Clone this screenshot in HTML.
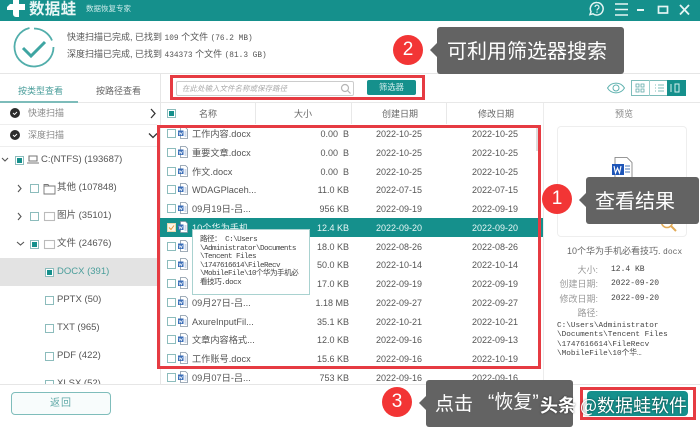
<!DOCTYPE html>
<html lang="zh"><head><meta charset="utf-8"><style>
html,body{margin:0;padding:0}
body{width:700px;height:428px;overflow:hidden;background:#fff;position:relative;font-family:"Liberation Sans","Noto Sans CJK SC",sans-serif;color:#555}
.a{position:absolute;white-space:nowrap}
.t{position:absolute;white-space:nowrap;line-height:14px;height:14px}
.m{font-family:"Liberation Mono","Noto Sans CJK SC",monospace}
.cb{position:absolute;width:7px;height:7px;border:1px solid #8cbcbc;background:#fff}
.cb.on::after{content:"";position:absolute;left:1px;top:1px;width:5px;height:5px;background:#15908c}
.row{position:absolute;left:160px;width:383px;height:19px;font-size:9.2px;color:#555}
.row .cb{left:7px;top:5px}
.row svg.i{position:absolute;left:18px;top:3px}
.row span{position:absolute;top:1px;line-height:19px;white-space:nowrap}
.n{left:32px}.s{right:194px;font-size:9px}.c{left:200px;width:78px;text-align:center;font-size:9px}.d{left:296px;width:78px;text-align:center;font-size:9px}
.sel{background:#15908c;color:#e8f6f5}
.box{position:absolute;border:3px solid #e63b42;box-sizing:border-box}
.call{position:absolute;background:#636363;border-radius:3px;color:#fff;font-size:20px;font-family:"Noto Sans CJK SC",sans-serif;white-space:nowrap}
.arr{position:absolute;width:0;height:0;border:7px solid transparent;border-right-color:#636363;border-left:0}
.num{position:absolute;width:30px;height:30px;border-radius:50%;background:#f23535;color:#fff;font-size:19px;line-height:30px;text-align:center}
.lb{position:absolute;width:50px;text-align:right;left:548px;font-size:9px;color:#999;line-height:14px}
.val{position:absolute;left:611px;font-size:8px;color:#444;line-height:14px}
</style></head><body>
<svg width="0" height="0" style="position:absolute"><defs><symbol id="f" viewBox="0 0 10 12"><path d="M2.500.5h5l2 2v9h-7z" fill="#fff" stroke="#8494a4" stroke-width=".8"/><rect x="0" y="3.500" width="5.500" height="5.500" fill="#3a6db8"/><path d="M1 5l.8 2.800.9-2 .9 2 .8-2.800" stroke="#fff" stroke-width=".6" fill="none"/><path d="M6.500 5h2M6.500 7h2M6.500 9h2" stroke="#7f9fce" stroke-width=".8"/></symbol></defs></svg>

<!-- title bar -->
<div class="a" style="left:0;top:0;width:700px;height:21px;background:#15908c"></div>
<svg class="a" style="left:6px;top:0" width="20" height="18"><path d="M7 0h6v4h6v6h-6v7h-3a3 3 0 0 1-3-3v-4h-6v-3l3-3h3z" fill="#fff"/></svg>
<div class="t" style="left:29px;top:1px;height:18px;line-height:18px;font-size:15.500px;font-weight:700;color:#e9f6f5;letter-spacing:.3px">数据蛙</div>
<div class="t" style="left:86px;top:2px;font-size:7.500px;color:#cfeceb">数据恢复专家</div>
<svg class="a" style="left:588px;top:0" width="112" height="20" fill="none" stroke="#e5f5f4" stroke-width="1.500">
<path d="M9 2.500a6.300 6.300 0 1 1-4 11.300l-3 .8 1-3a6.300 6.300 0 0 1 6-9.100z"/><path d="M7 7a2 2 0 1 1 3 1.800c-.8.500-1 1-1 1.700M9 11.500v1.200" stroke-width="1.200"/>
<path d="M27 4h13M27 9.500h13M27 15h13"/><path d="M49 10h7" stroke-width="2"/><rect x="70.500" y="6.500" width="9" height="6.500" stroke-width="1.700"/><path d="M92 5l9 9.500M101 5l-9 9.500" stroke-width="1.800"/></svg>

<!-- info -->
<svg class="a" style="left:11px;top:25px" width="46" height="46" fill="none" stroke="#52aeab" stroke-width="1.800"><path d="M23 3.500a19.500 19.500 0 0 1 18 12M42.500 22a19.500 19.500 0 1 1-24-19" /><path d="M12 23l8 8 14-14" stroke="#3ea5a2" stroke-width="3"/></svg>
<div class="t" style="left:67px;top:30px;font-size:9px;color:#555">快速扫描已完成, 已找到 <span class="m" style="font-size:7.800px">109</span> 个文件 <span class="m" style="font-size:7.800px">(76.2 MB)</span></div>
<div class="t" style="left:67px;top:47px;font-size:9px;color:#555">深度扫描已完成, 已找到 <span class="m" style="font-size:7.800px">434373</span> 个文件 <span class="m" style="font-size:7.800px">(81.3 GB)</span></div>

<!-- dividers -->
<div class="a" style="left:0;top:73px;width:700px;height:1px;background:#e6e6e6"></div>
<div class="a" style="left:0;top:102px;width:700px;height:1px;background:#e8e8e8"></div>
<div class="a" style="left:160px;top:74px;width:1px;height:310px;background:#e6e6e6"></div>
<div class="a" style="left:543px;top:103px;width:1px;height:281px;background:#ececec"></div>
<div class="a" style="left:0;top:384px;width:700px;height:1px;background:#e6e6e6"></div>

<!-- tabs -->
<div class="t" style="left:18px;top:84px;font-size:9px;color:#4b9e9b">按类型查看</div>
<div class="t" style="left:96px;top:84px;font-size:9px;color:#666">按路径查看</div>
<div class="a" style="left:0;top:101px;width:78px;height:2px;background:#7dbcba"></div>

<!-- tree -->
<svg class="a" style="left:10px;top:108px" width="10" height="10"><circle cx="5" cy="5" r="5" fill="#2c2c2c"/><path d="M3 5l1.500 1.500 2.500-2.500" stroke="#fff" fill="none" stroke-width=".9"/></svg>
<div class="t" style="left:28px;top:106px;font-size:9px;color:#888">快速扫描</div>
<svg class="a" style="left:149px;top:108px" width="8" height="11" fill="none" stroke="#333" stroke-width="1.300"><path d="M2 1l4 4.500-4 4.500"/></svg>
<div class="a" style="left:0;top:124px;width:157px;height:1px;background:#eee"></div>
<svg class="a" style="left:10px;top:130px" width="10" height="10"><circle cx="5" cy="5" r="5" fill="#2c2c2c"/><path d="M3 5l1.500 1.500 2.500-2.500" stroke="#fff" fill="none" stroke-width=".9"/></svg>
<div class="t" style="left:28px;top:128px;font-size:9px;color:#888">深度扫描</div>
<svg class="a" style="left:148px;top:132px" width="10" height="8" fill="none" stroke="#333" stroke-width="1.300"><path d="M1 1.500l4 4 4-4"/></svg>
<div class="a" style="left:0;top:146px;width:157px;height:1px;background:#eee"></div>

<svg class="a" style="left:0;top:150px" width="60" height="110" fill="none" stroke="#555" stroke-width="1.100">
<path d="M2 8l3 3 3-3"/><path d="M18 35l3 3.500-3 3.500M18 63l3 3.500-3 3.500M17 92l3.500 3 3.500-3"/>
<path d="M29 6h8v5h-8zM27 13h12" stroke="#777"/><path d="M44 36h11v8h-11zM44 36v-1.500h4l1 1.500" stroke="#777" stroke-width=".9"/><rect x="44.500" y="62.500" width="10" height="8" stroke="#bbb"/><rect x="44.500" y="90.500" width="10" height="8" stroke="#bbb"/></svg>
<div class="cb on" style="left:15px;top:156px"></div>
<div class="t" style="left:41px;top:153px;font-size:9.500px;color:#555">C:(NTFS) (193687)</div>
<div class="cb" style="left:30px;top:184px"></div>
<div class="t" style="left:57px;top:181px;font-size:9.500px;color:#555">其他 (107848)</div>
<div class="cb" style="left:30px;top:212px"></div>
<div class="t" style="left:57px;top:209px;font-size:9.500px;color:#555">图片 (35101)</div>
<div class="cb on" style="left:30px;top:240px"></div>
<div class="t" style="left:57px;top:237px;font-size:9.500px;color:#555">文件 (24676)</div>
<div class="a" style="left:0;top:258px;width:157px;height:28px;background:#e3e3e3"></div>
<div class="cb on" style="left:45px;top:268px"></div>
<div class="t" style="left:57px;top:265px;font-size:9.500px;color:#4b9e9b">DOCX (391)</div>
<div class="cb" style="left:45px;top:296px"></div>
<div class="t" style="left:57px;top:293px;font-size:9.500px;color:#555">PPTX (50)</div>
<div class="cb" style="left:45px;top:324px"></div>
<div class="t" style="left:57px;top:321px;font-size:9.500px;color:#555">TXT (965)</div>
<div class="cb" style="left:45px;top:352px"></div>
<div class="t" style="left:57px;top:349px;font-size:9.500px;color:#555">PDF (422)</div>
<div class="cb" style="left:45px;top:380px"></div>
<div class="t" style="left:57px;top:377px;font-size:9.500px;color:#555">XLSX (52)</div>
<div class="a" style="left:0;top:384px;width:160px;height:44px;background:#fff;border-top:1px solid #e6e6e6;box-sizing:border-box"></div>
<div class="a" style="left:11px;top:392px;width:100px;height:23px;box-sizing:border-box;border:1px solid #7fbdbb;border-radius:4px;background:#f8fcfc;color:#5fa9a7;font-size:10px;line-height:21px;text-align:center;letter-spacing:1px">返回</div>

<!-- toolbar -->
<div class="a" style="left:176px;top:81px;width:178px;height:15px;box-sizing:border-box;border:1px solid #ccc;border-radius:2px;color:#aaa;font-size:7.500px;line-height:13px;padding-left:5px;font-style:italic">在此处输入文件名称或保存路径</div>
<svg class="a" style="left:340px;top:83px" width="12" height="12" fill="none" stroke="#b5b5b5" stroke-width="1.200"><circle cx="5" cy="5" r="3.500"/><path d="M7.500 7.500l3 3"/></svg>
<div class="a" style="left:367px;top:80px;width:49px;height:15px;background:#15908c;border-radius:2px;color:#d8f0ef;font-size:8.300px;line-height:15px;text-align:center">筛选器</div>
<svg class="a" style="left:606px;top:81px" width="20" height="14" fill="none" stroke="#5fb2af" stroke-width="1"><path d="M1.500 7c4-6.500 13-6.500 17 0-4 6.500-13 6.500-17 0z"/><circle cx="10" cy="7" r="3"/></svg>
<div class="a" style="left:631px;top:80px;width:54px;height:16px;box-sizing:border-box;border:1px solid #7dbcba;background:#fff"></div>
<div class="a" style="left:667px;top:80px;width:19px;height:16px;background:#15908c"></div>
<svg class="a" style="left:631px;top:80px" width="56" height="16" fill="none"><path d="M18.500 0v16" stroke="#9ccfcd"/><path d="M7 4.500h3v3h-3zM12 4.500h3v3h-3zM7 9.500h3v3h-3zM12 9.500h3v3h-3z" stroke="#5fa9a7" stroke-width=".8" transform="translate(-2 -.5)"/><path d="M24 5h1M27 5h6M24 8h1M27 8h6M24 11h1M27 11h6" stroke="#7dbcba"/><path d="M40 4v8M44 4h4v8h-4z" stroke="#d5efee"/></svg>

<!-- table header -->
<div class="cb on" style="left:167px;top:109px"></div>
<div class="t" style="left:199px;top:107px;font-size:9px;color:#666">名称</div>
<div class="t" style="left:294px;top:107px;font-size:9px;color:#666">大小</div>
<div class="t" style="left:382px;top:107px;font-size:9px;color:#666">创建日期</div>
<div class="t" style="left:478px;top:107px;font-size:9px;color:#666">修改日期</div>
<div class="a" style="left:255px;top:103px;width:1px;height:21px;background:#e8e8e8"></div>
<div class="a" style="left:351px;top:103px;width:1px;height:21px;background:#e8e8e8"></div>
<div class="a" style="left:446px;top:103px;width:1px;height:21px;background:#e8e8e8"></div>

<!-- rows -->
<div class="row" style="top:124px"><div class="cb"></div><svg class="i" width="10" height="12"><use href="#f"/></svg><span class="n">工作内容.docx</span><span class="s">0.00&nbsp; B</span><span class="c">2022-10-25</span><span class="d">2022-10-25</span></div>
<div class="row" style="top:143px"><div class="cb"></div><svg class="i" width="10" height="12"><use href="#f"/></svg><span class="n">重要文章.docx</span><span class="s">0.00&nbsp; B</span><span class="c">2022-10-25</span><span class="d">2022-10-25</span></div>
<div class="row" style="top:162px"><div class="cb"></div><svg class="i" width="10" height="12"><use href="#f"/></svg><span class="n">作文.docx</span><span class="s">0.00&nbsp; B</span><span class="c">2022-10-25</span><span class="d">2022-10-25</span></div>
<div class="row" style="top:180px"><div class="cb"></div><svg class="i" width="10" height="12"><use href="#f"/></svg><span class="n">WDAGPlaceh...</span><span class="s">11.0 KB</span><span class="c">2022-07-15</span><span class="d">2022-07-15</span></div>
<div class="row" style="top:199px"><div class="cb"></div><svg class="i" width="10" height="12"><use href="#f"/></svg><span class="n">09月19日-吕...</span><span class="s">956 KB</span><span class="c">2022-09-19</span><span class="d">2022-09-19</span></div>
<div class="row sel" style="top:218px"><div class="cb" style="border-color:#e8d8b0;background:#fdf6e6"><svg style="position:absolute;left:0;top:0" width="7" height="7" fill="none" stroke="#e0983a"><path d="M1 3.500l2 2 3-4"/></svg></div><svg class="i" width="10" height="12"><use href="#f"/></svg><span class="n">10个华为手机...</span><span class="s">12.4 KB</span><span class="c">2022-09-20</span><span class="d">2022-09-20</span></div>
<div class="row" style="top:237px"><div class="cb"></div><svg class="i" width="10" height="12"><use href="#f"/></svg><span class="s">18.0 KB</span><span class="c">2022-08-26</span><span class="d">2022-08-26</span></div>
<div class="row" style="top:255px"><div class="cb"></div><svg class="i" width="10" height="12"><use href="#f"/></svg><span class="s">50.0 KB</span><span class="c">2022-10-14</span><span class="d">2022-10-14</span></div>
<div class="row" style="top:274px"><div class="cb"></div><svg class="i" width="10" height="12"><use href="#f"/></svg><span class="s">17.0 KB</span><span class="c">2022-09-19</span><span class="d">2022-09-19</span></div>
<div class="row" style="top:293px"><div class="cb"></div><svg class="i" width="10" height="12"><use href="#f"/></svg><span class="n">09月27日-吕...</span><span class="s">1.18 MB</span><span class="c">2022-09-27</span><span class="d">2022-09-27</span></div>
<div class="row" style="top:312px"><div class="cb"></div><svg class="i" width="10" height="12"><use href="#f"/></svg><span class="n">AxureInputFil...</span><span class="s">35.1 KB</span><span class="c">2022-10-21</span><span class="d">2022-10-21</span></div>
<div class="row" style="top:330px"><div class="cb"></div><svg class="i" width="10" height="12"><use href="#f"/></svg><span class="n">文章内容格式...</span><span class="s">12.0 KB</span><span class="c">2022-09-16</span><span class="d">2022-09-13</span></div>
<div class="row" style="top:349px"><div class="cb"></div><svg class="i" width="10" height="12"><use href="#f"/></svg><span class="n">工作账号.docx</span><span class="s">15.6 KB</span><span class="c">2022-09-16</span><span class="d">2022-10-19</span></div>
<div class="row" style="top:368px;height:16px;overflow:hidden"><div class="cb"></div><svg class="i" width="10" height="12"><use href="#f"/></svg><span class="n">09月07日-吕...</span><span class="s">753 KB</span><span class="c">2022-09-16</span><span class="d">2022-09-16</span></div>
<div class="a" style="left:536px;top:125px;width:2px;height:26px;background:#ddd"></div>

<!-- tooltip -->
<div class="a m" style="left:192px;top:229px;width:118px;height:66px;box-sizing:border-box;border:1px solid #a9d2d0;background:#fff;color:#444;font-size:7.600px;letter-spacing:-.56px;line-height:8.600px;padding:6px 0 0 7px">路径： C:\Users<br>\Administrator\Documents<br>\Tencent Files<br>\1747616614\FileRecv<br>\MobileFile\10个华为手机必<br>看技巧.docx</div>

<!-- preview -->
<div class="t" style="left:615px;top:107px;font-size:9px;color:#888">预览</div>
<div class="a" style="left:557px;top:126px;width:130px;height:111px;box-sizing:border-box;border:1px solid #eee;border-radius:4px"></div>
<svg class="a" style="left:611px;top:157px" width="22" height="26"><path d="M4 .500h12l5 5v20h-17z" fill="#fff" stroke="#777" stroke-width=".8"/><rect x="1" y="7" width="12" height="11" fill="#1d55b8"/><path d="M3 9l1.500 7 2-5 2 5 1.500-7" stroke="#fff" stroke-width="1.100" fill="none"/><path d="M14 9h5M14 12h5M14 15h5" stroke="#6f93c8" stroke-width="1.200"/></svg>
<svg class="a" style="left:659px;top:214px" width="20" height="20" fill="none" stroke="#e2ab58" stroke-width="1.600"><circle cx="8" cy="8" r="5.500"/><path d="M12 12l5 5" stroke-width="2"/></svg>
<div class="t" style="left:567px;top:244px;font-size:9px;color:#666">10个华为手机必看技巧. <span class="m" style="font-size:8px">docx</span></div>
<div class="lb" style="top:263px">大小:</div><div class="val m" style="top:263px">12.4 KB</div>
<div class="lb" style="top:277px">创建日期:</div><div class="val m" style="top:277px">2022-09-20</div>
<div class="lb" style="top:292px">修改日期:</div><div class="val m" style="top:292px">2022-09-20</div>
<div class="lb" style="top:306px">路径:</div>
<div class="a m" style="left:557px;top:322px;font-size:7.700px;line-height:9.400px;color:#444">C:\Users\Administrator<br>\Documents\Tencent Files<br>\1747616614\FileRecv<br>\MobileFile\10个华…</div>

<!-- footer button -->
<div class="a" style="left:587px;top:391px;width:101px;height:25px;background:#15908c;border-radius:4px"></div>

<!-- red highlight boxes -->
<div class="box" style="left:170px;top:75px;width:255px;height:25px"></div>
<div class="box" style="left:157px;top:125px;width:384px;height:244px"></div>
<div class="box" style="left:580px;top:387px;width:116px;height:33px"></div>

<!-- callouts -->
<div class="num" style="left:393px;top:35px">2</div>
<div class="arr" style="left:430px;top:43px"></div>
<div class="call" style="left:437px;top:27px;width:187px;height:47px;line-height:46px;text-indent:10px">可利用筛选器搜索</div>

<div class="num" style="left:542px;top:184px">1</div>
<div class="arr" style="left:579px;top:193px"></div>
<div class="call" style="left:586px;top:177px;width:113px;height:47px;line-height:46px;text-indent:9px">查看结果</div>

<div class="num" style="left:382px;top:387px">3</div>
<div class="arr" style="left:419px;top:396px"></div>
<div class="call" style="left:426px;top:380px;width:147px;height:47px;overflow:hidden">
<span class="a" style="left:9px;top:0;line-height:46px;font-size:19px">点击</span>
<span class="a" style="left:62px;top:0;line-height:46px;font-size:19px;font-family:'Liberation Sans','Noto Sans CJK SC',sans-serif">“恢复”</span>
</div>

<div class="a" style="left:540px;top:393px;height:24px;line-height:24px;font-size:18px;font-family:'Noto Sans CJK SC',sans-serif;color:#fff;text-shadow:0 0 2px rgba(0,0,0,.6)"><b>头条</b> @数据蛙软件</div>
</body></html>
